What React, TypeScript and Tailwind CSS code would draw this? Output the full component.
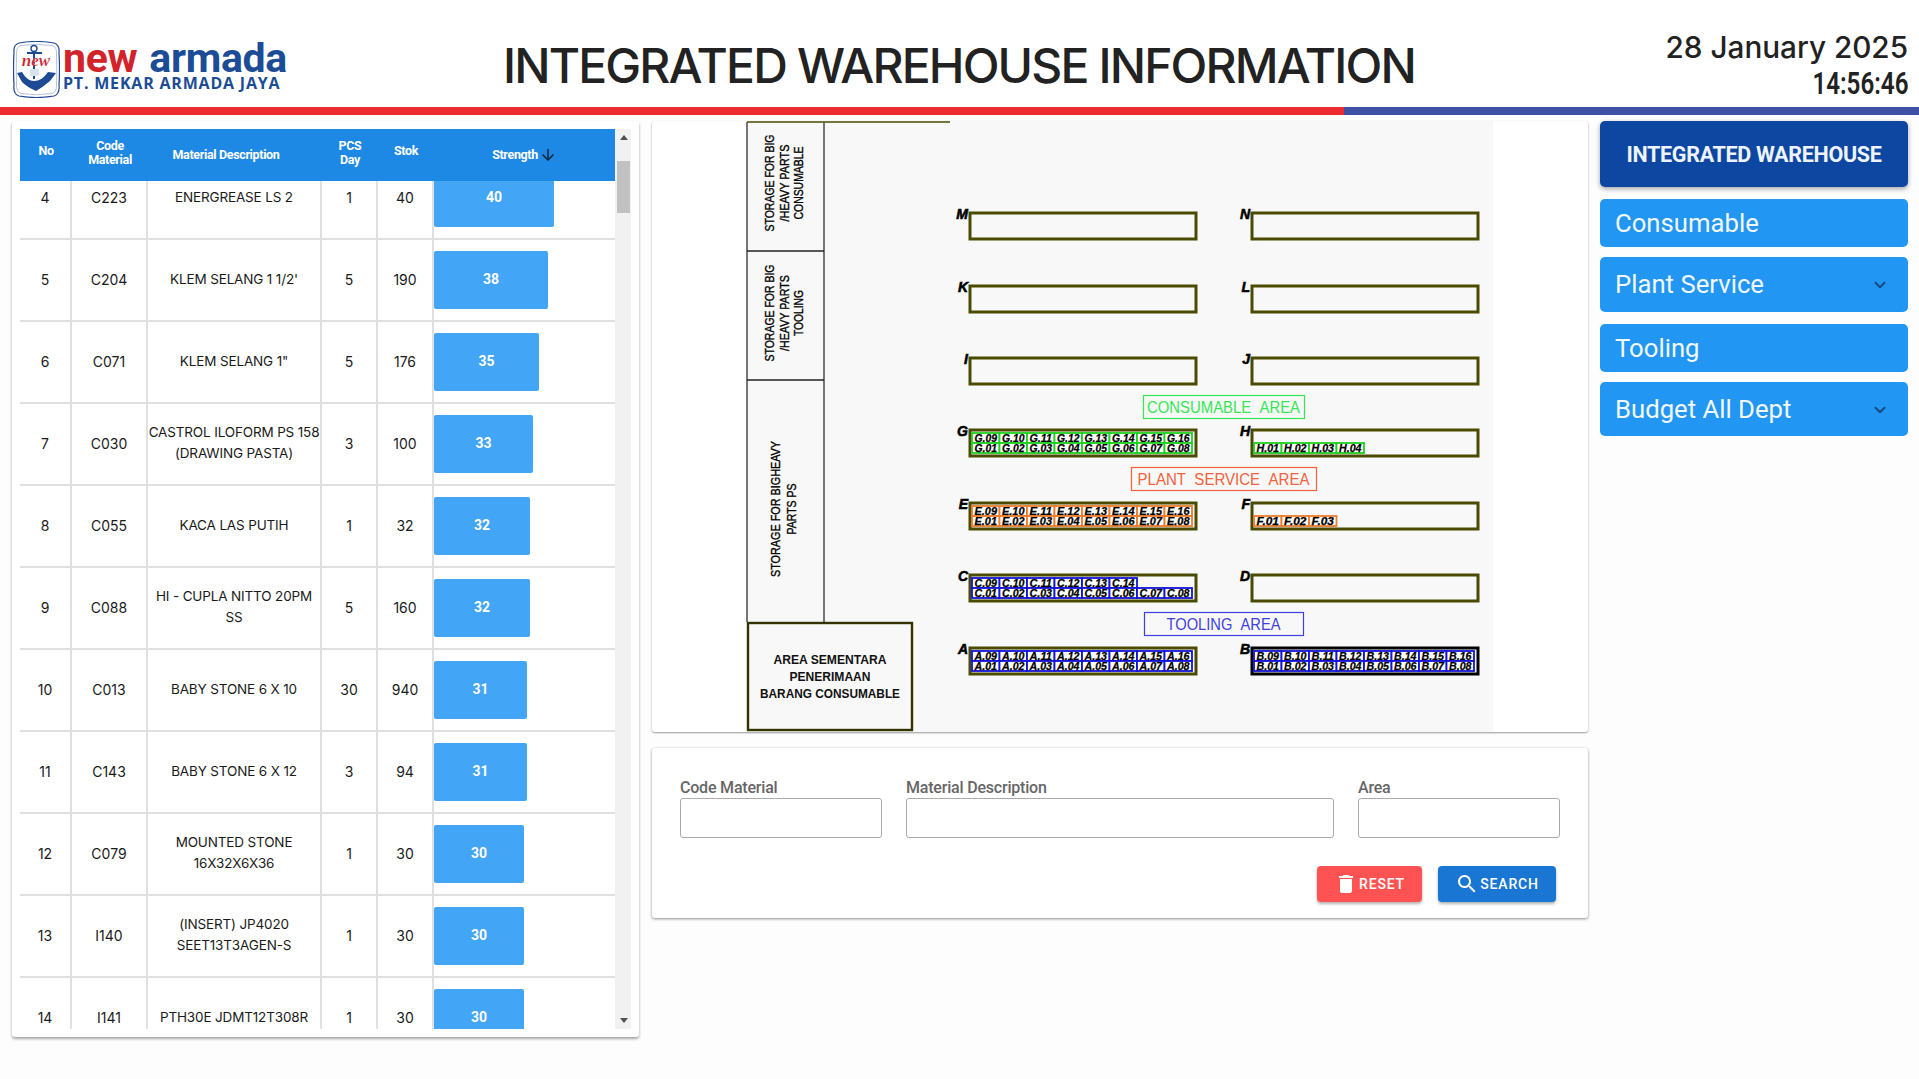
import { ChevronDown } from 'lucide-react'

const rows = [
  { no: 4, code: 'C223', desc: ['ENERGREASE LS 2'], pcs: 1, stok: 40, strength: 40 },
  { no: 5, code: 'C204', desc: ["KLEM SELANG 1 1/2'"], pcs: 5, stok: 190, strength: 38 },
  { no: 6, code: 'C071', desc: ['KLEM SELANG 1"'], pcs: 5, stok: 176, strength: 35 },
  { no: 7, code: 'C030', desc: ['CASTROL ILOFORM PS 158', '(DRAWING PASTA)'], pcs: 3, stok: 100, strength: 33 },
  { no: 8, code: 'C055', desc: ['KACA LAS PUTIH'], pcs: 1, stok: 32, strength: 32 },
  { no: 9, code: 'C088', desc: ['HI - CUPLA NITTO 20PM', 'SS'], pcs: 5, stok: 160, strength: 32 },
  { no: 10, code: 'C013', desc: ['BABY STONE 6 X 10'], pcs: 30, stok: 940, strength: 31 },
  { no: 11, code: 'C143', desc: ['BABY STONE 6 X 12'], pcs: 3, stok: 94, strength: 31 },
  { no: 12, code: 'C079', desc: ['MOUNTED STONE', '16X32X6X36'], pcs: 1, stok: 30, strength: 30 },
  { no: 13, code: 'I140', desc: ['(INSERT) JP4020', 'SEET13T3AGEN-S'], pcs: 1, stok: 30, strength: 30 },
  { no: 14, code: 'I141', desc: ['PTH30E JDMT12T308R'], pcs: 1, stok: 30, strength: 30 },
]

const GRID = 'grid grid-cols-[52px_76px_174px_56px_56px_181px]'

function Logo() {
  return (
    <div className="flex items-center">
      <svg width="47" height="57" viewBox="0 0 47 57" className="mt-[10px] shrink-0">
        <path d="M6 2 Q23 -1 41 2 Q47 4 46 12 Q47 28 46 44 Q47 53 41 55 Q23 58 6 55 Q0 53 1 44 Q0 28 1 12 Q0 4 6 2Z" fill="#fff" stroke="#1e4a94" strokeWidth="1.2" />
        <path d="M8 4.5 Q23 2 39 4.5 Q44 6 43.5 13 Q44 28 43.5 43 Q44 51 39 52.5 Q23 55 8 52.5 Q3 51 3.5 43 Q3 28 3.5 13 Q3 6 8 4.5Z" fill="none" stroke="#7f9cc9" strokeWidth="0.6" />
        <circle cx="21" cy="7.5" r="3" fill="none" stroke="#1e4a94" strokeWidth="1.4" />
        <path d="M14 12 H29 M21 10 V38" stroke="#1e4a94" strokeWidth="2" />
        <path d="M4 32 L9 31 Q14 40 21 40 Q29 40 35 31 L43 32 L37 40 Q30 46 23 50 Q14 46 9 41Z" fill="#1e4a94" />
        <rect x="17" y="28" width="9" height="7" fill="#d9e3f2" />
        <text x="23" y="25" textAnchor="middle" className="font-['Liberation_Serif'] text-[17px] font-bold italic" fill="#c8202b" stroke="#fff" strokeWidth="0.2">new</text>
      </svg>
      <div className="mb-[4px] ml-[3px] flex flex-col pt-[5px]">
        <div className="flex h-[36px] items-end font-[Roboto,sans-serif] text-[41px] font-bold leading-[36px] tracking-[-0.3px]">
          <span className="text-[#d2232a]">new</span>
          <span className="ml-[12px] text-[#1c4c96]">armada</span>
        </div>
        <div className="whitespace-nowrap font-['Open_Sans',sans-serif] text-[16px] font-bold leading-[14px] tracking-[0.8px] text-[#1c4c96]">
          PT. MEKAR ARMADA JAYA
        </div>
      </div>
    </div>
  )
}

function Header() {
  return (
    <header className="relative flex h-[107px] items-center bg-white pl-[13px] pr-[11px] pt-[22px]">
      <div className="w-[490px] shrink-0">
        <Logo />
      </div>
      <h1 className="mt-[2px] flex-1 whitespace-nowrap font-[Inter,sans-serif] text-[48px] font-medium leading-none tracking-[-1.85px] text-[#222]">
        INTEGRATED WAREHOUSE INFORMATION
      </h1>
      <div className="-mt-[4px] text-right text-[#222]">
        <div className="whitespace-nowrap font-[Inter,sans-serif] text-[29.7px] font-medium leading-[40px]">28 January 2025</div>
        <div className="mt-[2px] origin-right scale-x-[0.78] font-[Roboto,sans-serif] text-[31px] font-semibold leading-[30px]">14:56:46</div>
      </div>
    </header>
  )
}

function StrengthTable() {
  return (
    <section className="h-[916px] w-[627px] shrink-0 rounded-[3px] bg-white pl-[8px] pt-[8px] shadow-[0_2px_3px_rgba(0,0,0,0.35)]">
      <div className="flex h-[900px] w-[611px]">
        <div className="w-[595px]">
          <div className={`${GRID} h-[52px] items-center bg-[#1e88e5] text-center font-[Roboto,sans-serif] text-[12.5px] font-bold leading-[14px] tracking-[-0.35px] text-white`}>
            <div className="pb-[8px]">No</div>
            <div className="pb-[5px]">Code<br />Material</div>
            <div className="pr-[18px]">Material Description</div>
            <div className="pb-[5px]">PCS<br />Day</div>
            <div className="pb-[8px]">Stok</div>
            <div className="flex items-center justify-center gap-[1px]">
              Strength
              <svg width="18" height="18" viewBox="0 0 24 24" fill="#10233b">
                <path d="M20 12l-1.41-1.41L13 16.17V4h-2v12.17l-5.58-5.59L4 12l8 8 8-8z" />
              </svg>
            </div>
          </div>
          <div className="h-[848px] overflow-hidden">
            <div className="-mt-[23px] font-[Inter,sans-serif] text-[14px] leading-[21px] text-[#1a1a1a]">
              {rows.map((r) => (
                <div key={r.no} className={`${GRID} h-[82px] border-b-2 border-[#e0e0e0] text-center`}>
                  <div className="flex items-center justify-center border-r-2 border-[#e0e0e0] pb-[2px]">{r.no}</div>
                  <div className="flex items-center justify-center border-r-2 border-[#e0e0e0] pb-[2px]">{r.code}</div>
                  <div className="flex flex-col items-center justify-center whitespace-nowrap border-r-2 border-[#e0e0e0] pb-[2px] text-[13.5px] tracking-[-0.15px]">
                    {r.desc.map((line) => (
                      <span key={line}>{line}</span>
                    ))}
                  </div>
                  <div className="flex items-center justify-center border-r-2 border-[#e0e0e0] pb-[2px]">{r.pcs}</div>
                  <div className="flex items-center justify-center border-r-2 border-[#e0e0e0] pb-[2px]">{r.stok}</div>
                  <div className="flex items-center">
                    <div
                      className="flex h-[58px] items-center justify-center rounded-[2px] bg-[#42a5f5] pb-[2px] font-[Roboto,sans-serif] text-[14px] font-bold text-white"
                      style={{ width: r.strength * 3 }}
                    >
                      {r.strength}
                    </div>
                  </div>
                </div>
              ))}
            </div>
          </div>
        </div>
        <div className="relative h-[900px] w-[16px] bg-[#f1f1f1]">
          <div className="absolute left-[5px] top-[6px] h-0 w-0 border-x-[4px] border-b-[5px] border-x-transparent border-b-[#505050]" />
          <div className="absolute left-[2px] top-[32px] h-[52px] w-[13px] bg-[#c1c1c1]" />
          <div className="absolute bottom-[6px] left-[5px] h-0 w-0 border-x-[4px] border-t-[5px] border-x-transparent border-t-[#505050]" />
        </div>
      </div>
    </section>
  )
}

function Cells({ prefix, x, y, top, bottom, color }: { prefix: string; x: number; y: number; top: number[]; bottom: number[]; color: string }) {
  const w = 27.5
  const h = 10
  const cell = (n: number, i: number, cy: number) => (
    <g key={n}>
      <rect x={x + i * w} y={cy} width={w} height={h} fill="#fff" stroke={color} strokeWidth="1.8" />
      <text
        x={x + i * w + w / 2}
        y={cy + 8.8}
        textAnchor="middle"
        textLength={22.5}
        lengthAdjust="spacingAndGlyphs"
        className="font-['Liberation_Sans'] text-[10.5px] font-bold italic"
        fill="#000"
        stroke="#000"
        strokeWidth="0.25"
      >
        {`${prefix}.${String(n).padStart(2, '0')}`}
      </text>
    </g>
  )
  return (
    <g>
      {top.map((n, i) => cell(n, i, y))}
      {bottom.map((n, i) => cell(n, i, y + h))}
    </g>
  )
}

function Slot({ label, x, y, stroke = '#4a4a00' }: { label: string; x: number; y: number; stroke?: string }) {
  return (
    <g>
      <rect x={x + 1} y={y + 1} width="226" height="26" fill="none" stroke={stroke} strokeWidth="3" />
      <text x={x - 1} y={y + 7} textAnchor="end" className="font-['Liberation_Sans'] text-[14px] font-bold italic" fill="#000" stroke="#000" strokeWidth="0.6">
        {label}
      </text>
    </g>
  )
}

function AreaLabel({ text, x, y, w, tw, color }: { text: string; x: number; y: number; w: number; tw: number; color: string }) {
  return (
    <g>
      <rect x={x + 0.5} y={y + 0.5} width={w} height="23" fill="none" stroke={color} strokeWidth="1.2" />
      <text
        x={x + w / 2}
        y={y + 17.5}
        textAnchor="middle"
        textLength={tw}
        lengthAdjust="spacingAndGlyphs"
        className="font-['Liberation_Sans'] text-[16px]"
        fill={color}
      >
        {text}
      </text>
    </g>
  )
}

const seq = (from: number, to: number) => Array.from({ length: to - from + 1 }, (_, i) => from + i)

function Rotated({ x, y, len, children }: { x: number; y: number; len: number; children: string }) {
  return (
    <text transform={`translate(${x} ${y}) rotate(-90)`} textLength={len} lengthAdjust="spacingAndGlyphs">
      {children}
    </text>
  )
}

function WarehouseMap() {
  return (
    <section className="h-[611px] rounded-[3px] bg-white shadow-[0_1px_2px_rgba(0,0,0,0.4)]">
      <svg width="936" height="611" viewBox="652 121 936 611" className="block">
        <rect x="747" y="121" width="746" height="611" fill="#f8f8f8" />
        <path d="M747 122 H950" stroke="#4a4a00" strokeWidth="1.5" fill="none" />
        <path d="M747 122 V622 M824 122 V622" stroke="#555" strokeWidth="1.6" fill="none" />
        <path d="M747 251 H824 M747 380 H824" stroke="#222" strokeWidth="1.6" fill="none" />
        <g className="font-['Liberation_Sans'] text-[12.5px]" fill="#000" textAnchor="middle" stroke="#000" strokeWidth="0.35">
          <Rotated x={774} y={183} len={97}>STORAGE FOR BIG</Rotated>
          <Rotated x={789} y={183} len={77}>/HEAVY PARTS</Rotated>
          <Rotated x={803} y={183} len={73}>CONSUMABLE</Rotated>
          <Rotated x={774} y={313} len={97}>STORAGE FOR BIG</Rotated>
          <Rotated x={789} y={313} len={76}>/HEAVY PARTS</Rotated>
          <Rotated x={803} y={313} len={46}>TOOLING</Rotated>
          <Rotated x={780} y={509} len={136}>STORAGE FOR BIGHEAVY</Rotated>
          <Rotated x={796} y={509} len={51}>PARTS PS</Rotated>
        </g>
        <rect x="748" y="623" width="164" height="107" fill="#f8f8f8" stroke="#333300" strokeWidth="2.4" />
        <g className="font-['Liberation_Sans'] text-[13.5px] font-bold" fill="#111" textAnchor="middle">
          <text x="830" y="664" textLength={113} lengthAdjust="spacingAndGlyphs">AREA SEMENTARA</text>
          <text x="830" y="681" textLength={81} lengthAdjust="spacingAndGlyphs">PENERIMAAN</text>
          <text x="830" y="698" textLength={140} lengthAdjust="spacingAndGlyphs">BARANG CONSUMABLE</text>
        </g>

        <Slot label="M" x={969} y={212} />
        <Slot label="N" x={1251} y={212} />
        <Slot label="K" x={969} y={285} />
        <Slot label="L" x={1251} y={285} />
        <Slot label="I" x={969} y={357} />
        <Slot label="J" x={1251} y={357} />
        <Slot label="G" x={969} y={429} />
        <Slot label="H" x={1251} y={429} />
        <Slot label="E" x={969} y={502} />
        <Slot label="F" x={1251} y={502} />
        <Slot label="C" x={969} y={574} />
        <Slot label="D" x={1251} y={574} />
        <Slot label="A" x={969} y={647} />
        <Slot label="B" x={1251} y={647} stroke="#000" />

        <AreaLabel text={'CONSUMABLE\u00a0\u00a0AREA'} x={1143} y={395} w={161} tw={153} color="#35e655" />
        <AreaLabel text={'PLANT\u00a0\u00a0SERVICE\u00a0\u00a0AREA'} x={1131} y={467} w={185} tw={172} color="#f0623c" />
        <AreaLabel text={'TOOLING\u00a0\u00a0AREA'} x={1144} y={612} w={159} tw={114} color="#3f3fe0" />

        <Cells prefix="G" x={972} y={433} top={seq(9, 16)} bottom={seq(1, 8)} color="#1fd01f" />
        <Cells prefix="H" x={1254} y={433} top={[]} bottom={seq(1, 4)} color="#1fd01f" />
        <Cells prefix="E" x={972} y={506} top={seq(9, 16)} bottom={seq(1, 8)} color="#ee7b2a" />
        <Cells prefix="F" x={1254} y={506} top={[]} bottom={seq(1, 3)} color="#ee7b2a" />
        <Cells prefix="C" x={972} y={578} top={seq(9, 14)} bottom={seq(1, 8)} color="#1212d8" />
        <Cells prefix="A" x={972} y={651} top={seq(9, 16)} bottom={seq(1, 8)} color="#1212d8" />
        <Cells prefix="B" x={1254} y={651} top={seq(9, 16)} bottom={seq(1, 8)} color="#1212d8" />
      </svg>
    </section>
  )
}

function Field({ label, className }: { label: string; className: string }) {
  return (
    <label className={className}>
      <span className="block text-[16px] font-medium leading-[20px] tracking-[-0.2px] text-[#666]">{label}</span>
      <input className="block h-[40px] w-full rounded-[3px] border border-[#aaa] bg-white" />
    </label>
  )
}

function SearchForm() {
  return (
    <section className="mt-[16px] h-[170px] rounded-[3px] bg-white px-[28px] pt-[30px] font-[Roboto,sans-serif] shadow-[0_1px_3px_rgba(0,0,0,0.45)]">
      <div className="flex gap-[24px]">
        <Field label="Code Material" className="w-[202px]" />
        <Field label="Material Description" className="w-[428px]" />
        <Field label="Area" className="w-[202px]" />
      </div>
      <div className="mt-[28px] flex justify-end gap-[16px] pr-[4px] text-[14px] font-medium tracking-[0.8px] text-white">
        <button className="flex h-[36px] w-[105px] items-center justify-center gap-[1px] rounded-[4px] bg-[#ff5252] shadow-[0_2px_3px_rgba(0,0,0,0.3)]">
          <svg width="24" height="24" viewBox="0 0 24 24" fill="#fff">
            <path d="M6 19c0 1.1.9 2 2 2h8c1.1 0 2-.9 2-2V7H6v12zM19 4h-3.5l-1-1h-5l-1 1H5v2h14V4z" />
          </svg>
          RESET
        </button>
        <button className="flex h-[36px] w-[118px] items-center justify-center gap-[1px] rounded-[4px] bg-[#1976d2] shadow-[0_2px_3px_rgba(0,0,0,0.3)]">
          <svg width="24" height="24" viewBox="0 0 24 24" fill="#fff">
            <path d="M15.5 14h-.79l-.28-.27C15.41 12.59 16 11.11 16 9.5 16 5.91 13.09 3 9.5 3S3 5.91 3 9.5 5.91 16 9.5 16c1.61 0 3.09-.59 4.23-1.57l.27.28v.79l5 4.99L20.49 19l-4.99-5zm-6 0C7.01 14 5 11.99 5 9.5S7.01 5 9.5 5 14 7.01 14 9.5 11.99 14 9.5 14z" />
          </svg>
          SEARCH
        </button>
      </div>
    </section>
  )
}

function MenuItem({ label, className, expand }: { label: string; className: string; expand?: boolean }) {
  return (
    <div className={`flex items-center justify-between rounded-[5px] bg-[#2196f3] pl-[15px] pr-[19px] pt-[1px] text-[25.7px] leading-none text-[#f2f8fe] ${className}`}>
      {label}
      {expand && <ChevronDown className="h-[18px] w-[18px] text-[#164a7c]" strokeWidth={2.5} />}
    </div>
  )
}

function Sidebar() {
  return (
    <nav className="ml-[12px] w-[308px] shrink-0 font-[Roboto,sans-serif]">
      <div className="flex h-[66px] items-center justify-center rounded-[5px] bg-[#0d47a1] pt-[3px] text-[21.5px] font-bold tracking-[-0.3px] text-[#eef4fd] shadow-[0_2px_5px_rgba(0,0,0,0.35)]">
        INTEGRATED WAREHOUSE
      </div>
      <MenuItem label="Consumable" className="mt-[12px] h-[48px]" />
      <MenuItem label="Plant Service" className="mt-[10px] h-[55px]" expand />
      <MenuItem label="Tooling" className="mt-[12px] h-[48px]" />
      <MenuItem label="Budget All Dept" className="mt-[10px] h-[54px]" expand />
    </nav>
  )
}

export default function App() {
  return (
    <div className="h-[1079px] w-[1919px] overflow-hidden bg-[#fdfdfd]">
      <Header />
      <div className="flex h-[8px]">
        <div className="w-[1344px] bg-[#ed2b33]" />
        <div className="flex-1 bg-[#3f51a5]" />
      </div>
      <main className="flex pl-[12px] pt-[6px]">
        <StrengthTable />
        <div className="ml-[13px] w-[936px] shrink-0">
          <WarehouseMap />
          <SearchForm />
        </div>
        <Sidebar />
      </main>
    </div>
  )
}
